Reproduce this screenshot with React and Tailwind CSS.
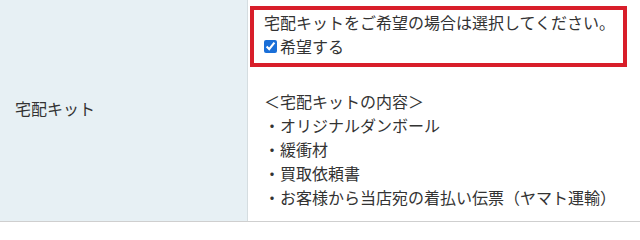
export default function App() {
  return (
    <div
      className="w-[640px] h-[226px] bg-white text-[#333] overflow-hidden"
      style={{ fontFamily: '"Noto Sans CJK JP", "Noto Sans", sans-serif' }}
    >
      <div className="flex border-b border-[#cfcfcf]">
        <div className="w-[248px] shrink-0 bg-[#e7f0f4] border-r border-[#d5dde0] flex items-center pl-[15px] pb-[6px] text-[16px] leading-[24px]">
          宅配キット
        </div>
        <div className="flex-1 pt-[6px] pb-[12px] pl-[2px] pr-[13px] text-[16px] leading-[24px]">
          <div className="border-4 border-[#d81e2a] pl-[10px] pb-[5px]">
            <div>宅配キットをご希望の場合は選択してください。</div>
            <label className="flex items-center">
              <input
                type="checkbox"
                defaultChecked
                className="w-[13px] h-[13px] m-0 mr-[3px] accent-[#1a6fd8]"
              />
              <span>希望する</span>
            </label>
          </div>
          <div className="pl-[14px] mt-[22px]">
            <div>＜宅配キットの内容＞</div>
            <div>・オリジナルダンボール</div>
            <div>・緩衝材</div>
            <div>・買取依頼書</div>
            <div>・お客様から当店宛の着払い伝票（ヤマト運輸）</div>
          </div>
        </div>
      </div>
    </div>
  );
}
